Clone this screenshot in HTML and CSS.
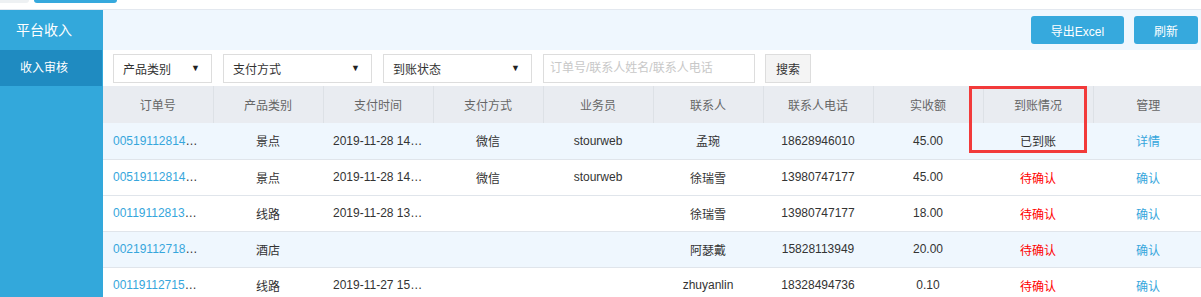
FILE: index.html
```html
<!DOCTYPE html>
<html lang="zh-CN">
<head>
    <meta charset="UTF-8">
    <meta name="viewport" content="width=device-width, initial-scale=1.0">
    <title>收入审核</title>
    <link rel="stylesheet" href="styles.css">
</head>
<body>
    <div class="tabs">
        <span class="tab"></span>
        <span class="tab tab-on"></span>
    </div>
    <div class="layout">
        <aside class="side">
            <div class="side-title">平台收入</div>
            <div class="side-item active">收入审核</div>
        </aside>
        <main class="main">
            <div class="toolbar">
                <button class="btn btn-excel">导出Excel</button>
                <button class="btn btn-refresh">刷新</button>
            </div>
            <div class="filters">
                <div class="select s1"><span>产品类别</span><span class="arrow">▼</span></div>
                <div class="select s2"><span>支付方式</span><span class="arrow">▼</span></div>
                <div class="select s3"><span>到账状态</span><span class="arrow">▼</span></div>
                <div class="search-input">订单号/联系人姓名/联系人电话</div>
                <button class="search-btn">搜索</button>
            </div>
            <div class="table-wrap">
                <table class="list">
                    <thead>
                        <tr>
                            <th>订单号</th>
                            <th>产品类别</th>
                            <th>支付时间</th>
                            <th>支付方式</th>
                            <th>业务员</th>
                            <th>联系人</th>
                            <th>联系人电话</th>
                            <th>实收额</th>
                            <th>到账情况</th>
                            <th>管理</th>
                        </tr>
                    </thead>
                    <tbody>
                        <tr class="hl">
                            <td class="trunc"><a href="#">005191128145632</a></td>
                            <td>景点</td>
                            <td class="trunc">2019-11-28 14:32:10</td>
                            <td>微信</td>
                            <td>stourweb</td>
                            <td>孟琬</td>
                            <td>18628946010</td>
                            <td>45.00</td>
                            <td>已到账</td>
                            <td><a href="#">详情</a></td>
                        </tr>
                        <tr>
                            <td class="trunc"><a href="#">005191128142218</a></td>
                            <td>景点</td>
                            <td class="trunc">2019-11-28 14:20:51</td>
                            <td>微信</td>
                            <td>stourweb</td>
                            <td>徐瑞雪</td>
                            <td>13980747177</td>
                            <td>45.00</td>
                            <td class="wait">待确认</td>
                            <td><a href="#">确认</a></td>
                        </tr>
                        <tr>
                            <td class="trunc"><a href="#">001191128135507</a></td>
                            <td>线路</td>
                            <td class="trunc">2019-11-28 13:55:07</td>
                            <td></td>
                            <td></td>
                            <td>徐瑞雪</td>
                            <td>13980747177</td>
                            <td>18.00</td>
                            <td class="wait">待确认</td>
                            <td><a href="#">确认</a></td>
                        </tr>
                        <tr class="hl">
                            <td class="trunc"><a href="#">002191127184410</a></td>
                            <td>酒店</td>
                            <td></td>
                            <td></td>
                            <td></td>
                            <td>阿瑟戴</td>
                            <td>15828113949</td>
                            <td>20.00</td>
                            <td class="wait">待确认</td>
                            <td><a href="#">确认</a></td>
                        </tr>
                        <tr>
                            <td class="trunc"><a href="#">001191127153326</a></td>
                            <td>线路</td>
                            <td class="trunc">2019-11-27 15:33:26</td>
                            <td></td>
                            <td></td>
                            <td>zhuyanlin</td>
                            <td>18328494736</td>
                            <td>0.10</td>
                            <td class="wait">待确认</td>
                            <td><a href="#">确认</a></td>
                        </tr>
                    </tbody>
                </table>
                <div class="mark"></div>
            </div>
        </main>
    </div>
</body>
</html>
```

FILE: styles.css
```css
*{
    box-sizing: border-box;
    font-family: "Liberation Sans", "Noto Sans CJK SC", sans-serif;
}
body{
    margin: 0;
    font-size: 12px;
    color: #333;
    background: #fff;
    overflow: hidden;
}
a{
    color: #36a6dc;
    text-decoration: none;
}
.tabs{
    height: 9px;
    display: flex;
    gap: 5px;
}
.tab{
    width: 29px;
    height: 3px;
    background: #eef1f3;
    border-radius: 0 0 3px 0;
}
.tab-on{
    width: 83px;
    background: #36a9dd;
    border-radius: 0 0 3px 3px;
}
.layout{
    display: flex;
    border-top: 1px solid #e3e8ef;
    height: 288px;
}
.side{
    width: 103px;
    flex-shrink: 0;
    background: #33a8db;
    color: #fff;
}
.side-title{
    height: 40px;
    line-height: 40px;
    padding-left: 16px;
    font-size: 14px;
}
.side-item{
    height: 36px;
    line-height: 36px;
    padding-left: 20px;
    font-size: 12px;
}
.active{
    background: #1f8bc1;
    width: 102px;
}
.main{
    flex: 1;
    min-width: 0;
}
.toolbar{
    height: 40px;
    background: #eff7fe;
    display: flex;
    justify-content: flex-end;
    align-items: center;
    gap: 10px;
    padding-right: 3px;
}
.btn{
    height: 28px;
    border: none;
    border-radius: 3px;
    background: #36a9dd;
    color: #fff;
    font-size: 12px;
    padding: 0;
}
.btn-excel{
    width: 93px;
}
.btn-refresh{
    width: 64px;
}
.filters{
    height: 36px;
    display: flex;
    align-items: center;
    gap: 11px;
    padding-left: 10px;
}
.select{
    height: 29px;
    border: 1px solid #ddd;
    display: flex;
    justify-content: space-between;
    align-items: center;
    padding: 0 11px 0 9px;
    color: #333;
}
.s1{
    width: 99px;
}
.s2, .s3{
    width: 149px;
}
.arrow{
    font-size: 9px;
    color: #222;
}
.search-input{
    width: 212px;
    height: 29px;
    line-height: 27px;
    border: 1px solid #ddd;
    padding-left: 6px;
    color: #c8c8c8;
}
.search-btn{
    width: 46px;
    height: 29px;
    margin-left: -1px;
    border: 1px solid #ddd;
    background: #f4f4f4;
    color: #333;
    font-size: 12px;
    padding: 0;
}
.table-wrap{
    position: relative;
}
.list{
    width: 1100px;
    table-layout: fixed;
    border-collapse: collapse;
}
.list th{
    height: 37px;
    background: #e9ecf1;
    color: #666;
    font-weight: normal;
    border-left: 1px solid #dde1e6;
}
.list th:first-child{
    border-left: none;
}
.list td{
    height: 36px;
    text-align: center;
    border-bottom: 1px solid #e0e5eb;
    padding: 0 10px;
    white-space: nowrap;
    overflow: hidden;
    text-overflow: ellipsis;
}
.list td.trunc{
    text-align: left;
}
.hl td{
    background: #eff7fe;
}
.wait{
    color: #ff0000;
}
.mark{
    position: absolute;
    left: 866px;
    top: 0;
    width: 118px;
    height: 67px;
    border: 3px solid #f23a3a;
}
```
